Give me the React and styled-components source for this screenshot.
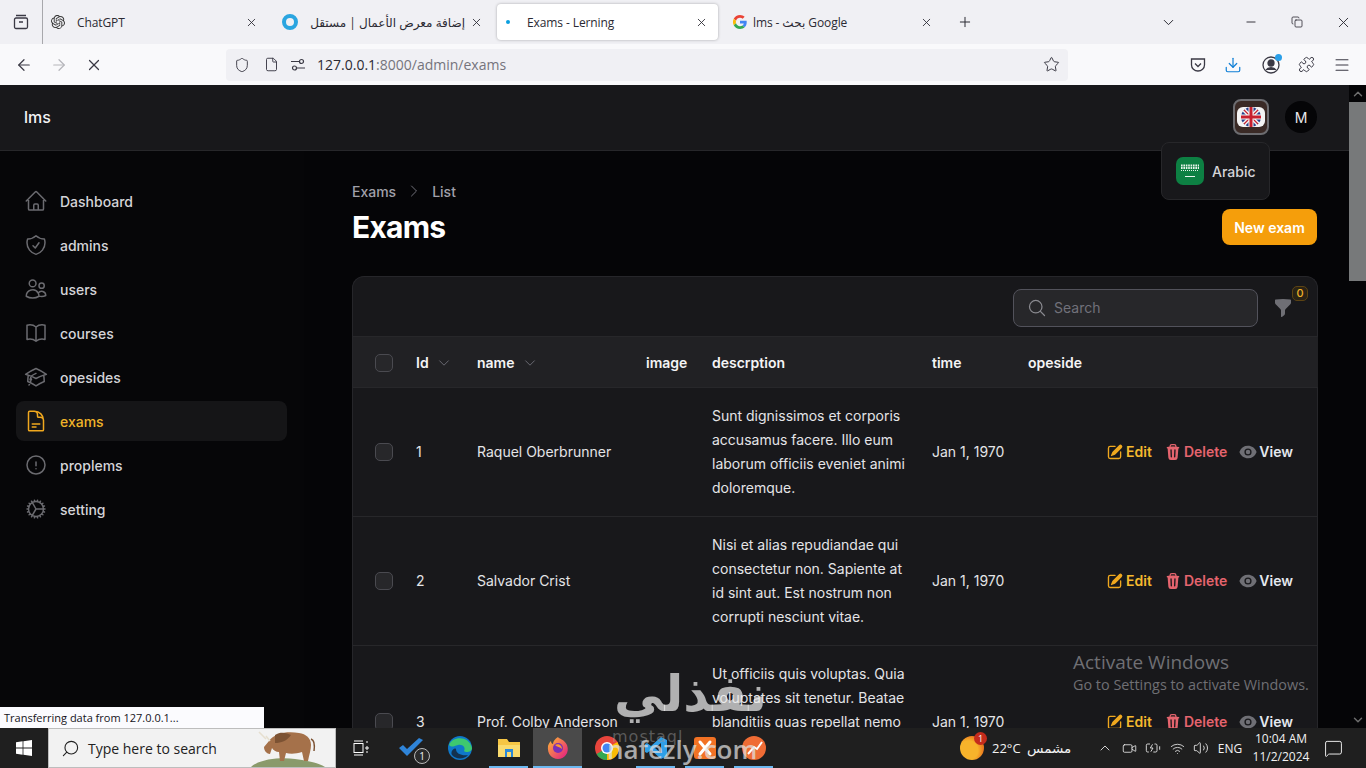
import React from 'react';
import styled, { createGlobalStyle } from 'styled-components';
import {
  ArrowLeft, ArrowRight, X, Shield, File, Star, Download, Puzzle, Menu, Plus, ChevronDown, ChevronUp, Minus, Copy,
  Search as SearchGlyph, Video, BatteryCharging, Wifi, Volume2, MessageSquare,
} from 'lucide-react';
import {
  HiOutlineHome, HiOutlineShieldCheck, HiOutlineUsers, HiOutlineBookOpen, HiOutlineAcademicCap, HiOutlineDocumentText,
  HiOutlineExclamationCircle, HiOutlineCog, HiOutlineMagnifyingGlass, HiOutlineChevronDown, HiOutlineChevronRight,
  HiMiniFunnel, HiMiniPencilSquare, HiMiniTrash, HiMiniEye,
} from 'react-icons/hi2';
import { SiOpenai } from 'react-icons/si';

const Global = createGlobalStyle`
  html, body { margin: 0; padding: 0; height: 100%; overflow: hidden; background: #000; }
  * { box-sizing: border-box; }
  #root { height: 100%; }
`;

const Screen = styled.div`
  position: relative; width: 1366px; height: 768px; display: flex; flex-direction: column; overflow: hidden;
  font-family: Inter, "Noto Sans", sans-serif;
`;

/* Browser tab strip */
const TabStrip = styled.div`
  position: relative; height: 44px; flex: none; background: #f0f0f4; display: flex; align-items: center;
  font-family: "Open Sans", "Noto Sans", "DejaVu Sans", sans-serif; color: #2b2a33;
`;
const TabsButton = styled.div`
  width: 43px; height: 44px; flex: none; border-right: 1px solid #a8a8ac; display: flex; align-items: center; justify-content: center; margin-right: 2px;
`;
const Tab = styled.div`
  width: 225px; height: 44px; flex: none; display: flex; align-items: center; position: relative; padding-left: ${p => p.$pad}px; font-size: 12px; letter-spacing: -0.1px;
  &::before {
    content: ''; position: absolute; left: 2px; right: 2px; top: 4px; bottom: 4px; border-radius: 4px;
    background: ${p => (p.$active ? '#fff' : 'transparent')}; box-shadow: ${p => (p.$active ? '0 0 3px rgba(0,0,0,.3)' : 'none')};
  }
  & > * { position: relative; }
`;
const Favicon = styled.span`
  width: 16px; height: 16px; flex: none; display: flex; align-items: center; justify-content: center;
`;
const TabTitle = styled.span`
  margin-left: ${p => p.$gap}px; white-space: nowrap;
  ${p => p.$rtl && 'direction: rtl; width: 150px;'}
`;
const TabClose = styled.span`
  position: absolute; left: 199px; top: 15px; width: 14px; height: 14px; display: flex; align-items: center; justify-content: center;
`;
const StripIcon = styled.span`
  position: absolute; top: 13px; left: ${p => p.$x}px; width: 18px; height: 18px; display: flex; align-items: center; justify-content: center;
`;
const ActiveDot = styled.span`
  width: 4px; height: 4px; border-radius: 50%; background: #0a9fe0;
`;

/* Browser nav bar */
const NavBar = styled.div`
  height: 41px; flex: none; background: #f9f9fb; display: flex; align-items: center; color: #3a3944;
  font-family: "Open Sans", "Noto Sans", sans-serif;
`;
const NavLeft = styled.div`
  width: 226px; flex: none; display: flex; align-items: center; padding-left: 15px; gap: 17px;
`;
const UrlBar = styled.div`
  width: 842px; height: 32px; flex: none; background: #f0f0f4; border-radius: 4px; display: flex; align-items: center; padding: 0 8px 0 7px; font-size: 14px;
`;
const UrlIcon = styled.span`
  width: 18px; display: flex; justify-content: center; margin-right: ${p => p.$mr}px; flex: none;
`;
const Host = styled.span`color: #2b2a33;`;
const Path = styled.span`color: #75747c;`;
const UrlStar = styled.span`margin-left: auto; display: flex;`;
const NavRight = styled.div`
  flex: 1; display: flex; align-items: center; padding-left: 121px; gap: 17px;
`;
const NavIcon = styled.span`
  position: relative; width: 18px; height: 18px; display: flex; align-items: center; justify-content: center; flex: none;
  margin-left: ${p => p.$ml || 0}px;
`;
const ProfileDot = styled.span`
  position: absolute; top: -2px; right: -2px; width: 7px; height: 7px; border-radius: 50%; background: #2a9fe8;
`;

/* App */
const AppFrame = styled.div`
  flex: 1; min-height: 0; display: flex; background: #050507; overflow: hidden;
`;
const AppColumn = styled.div`
  width: 1349px; flex: none; display: flex; flex-direction: column; min-height: 0;
`;
const Topbar = styled.header`
  position: relative; height: 66px; flex: none; background: #18181b; border-bottom: 1px solid #27272a;
  display: flex; align-items: center; padding: 0 32px 1px 24px; color: #f4f4f5;
`;
const Brand = styled.div`
  font-size: 16px; font-weight: 500; letter-spacing: 0; flex: 1;
`;
const LangButton = styled.div`
  width: 36px; height: 36px; border-radius: 8px; background: #3a2a26; border: 2px solid #6c6c70; display: flex; align-items: center; justify-content: center; margin-right: 16px;
`;
const Avatar = styled.div`
  width: 32px; height: 32px; border-radius: 50%; background: #050507; display: flex; align-items: center; justify-content: center; font-size: 14px; color: #e8e8ea;
`;
const LangMenu = styled.div`
  position: absolute; left: 1161px; top: 57px; width: 109px; height: 58px; background: #18181b; border: 1px solid #27272a; border-radius: 8px;
  display: flex; align-items: center; padding-left: 14px; gap: 8px; font-size: 14px; font-weight: 500; color: #d4d4d8; z-index: 2;
`;
const FlagBox = styled.div`
  width: 28px; height: 28px; border-radius: 7px; background: #0d8043; display: flex; align-items: center; justify-content: center;
`;
const BodyRow = styled.div`
  flex: 1; min-height: 0; display: flex; overflow: hidden;
`;
const Sidebar = styled.nav`
  width: 304px; flex: none; padding: 30px 17px 0 16px; display: flex; flex-direction: column; gap: 4px; background: #060608;
`;
const NavItem = styled.div`
  height: 40px; display: flex; align-items: center; gap: 12px; padding: 0 8px; border-radius: 8px; font-size: 14px; font-weight: 500;
  color: ${p => (p.$active ? '#f0b429' : '#d4d4d8')}; background: ${p => (p.$active ? '#151517' : 'transparent')};
  & svg { color: ${p => (p.$active ? '#f0a81e' : '#6b6b70')}; font-size: 24px; flex: none; margin-left: 0; }
`;
const Main = styled.main`
  flex: 1; min-width: 0; padding: 30px 32px 0 48px; background: #050507;
`;
const Crumbs = styled.div`
  height: 20px; display: flex; align-items: center; gap: 10px; font-size: 14px; font-weight: 500; color: #a1a1aa;
  & svg { color: #71717a; font-size: 16px; }
`;
const HeadRow = styled.div`
  margin-top: 8px; display: flex; align-items: center; justify-content: space-between; height: 36px;
`;
const Title = styled.h1`
  margin: 0; font-size: 30px; line-height: 36px; font-weight: 700; color: #fff; letter-spacing: -0.75px;
`;
const NewButton = styled.button`
  height: 36px; width: 95px; border: 0; border-radius: 8px; background: #f59e0b; color: #fff; font: 600 14px Inter, sans-serif; padding: 0;
`;
const Card = styled.section`
  margin-top: 31px; width: 966px; background: #18181b; border: 1px solid #26262a; border-bottom: 0; border-radius: 12px 12px 0 0;
`;
const Toolbar = styled.div`
  height: 60px; display: flex; align-items: center; justify-content: flex-end; padding: 2px 24px 0 0; border-bottom: 1px solid #27272a;
`;
const SearchBox = styled.div`
  width: 245px; height: 38px; background: #27272a; border: 1px solid #52525b; border-radius: 8px; display: flex; align-items: center; padding-left: 13px; gap: 7px;
  font-size: 14px; color: #71717a;
  & svg { color: #8a8a90; font-size: 20px; }
`;
const FilterWrap = styled.div`
  position: relative; width: 20px; height: 20px; margin-left: 15px; color: #6f6f75; font-size: 20px; display: flex;
`;
const FilterBadge = styled.span`
  position: absolute; left: 19px; top: -12px; width: 16px; height: 15px; border-radius: 5px; background: #2a2316; border: 1px solid #5c4313; color: #f0b429;
  font-size: 11px; font-weight: 500; display: flex; align-items: center; justify-content: center;
`;
const Table = styled.table`
  width: 965px; table-layout: fixed; border-collapse: collapse; font-size: 14px; color: #e4e4e7;
`;
const HeadRowT = styled.tr`
  height: 50px; background: #212124;
`;
const Th = styled.th`
  padding: 2px 12px 0; text-align: left; font-weight: 600; color: #f4f4f5; white-space: nowrap;
  & svg { color: #71717a; font-size: 14px; margin-left: 8px; vertical-align: -2px; }
`;
const Tr = styled.tr`
  border-top: 1px solid #27272a;
`;
const Td = styled.td`
  padding: 16px 12px; line-height: 24px; vertical-align: middle; white-space: ${p => (p.$wrap ? 'normal' : 'nowrap')};
`;
const CheckCell = styled.td`
  padding: 0 0 0 22px; vertical-align: middle;
`;
const CheckHead = styled.th`
  padding: 2px 0 0 22px; vertical-align: middle;
`;
const Checkbox = styled.div`
  width: 18px; height: 18px; border-radius: 5px; background: #27272a; border: 1px solid #4a4a50;
`;
const Actions = styled.div`
  display: flex; justify-content: flex-end; gap: 12px; padding-right: 13px; font-weight: 600;
`;
const Action = styled.span`
  display: inline-flex; align-items: center; gap: 2px; color: ${p => p.$color};
  & svg { font-size: 18px; color: ${p => p.$icon || p.$color}; }
`;

/* Scrollbar */
const Scrollbar = styled.div`
  width: 17px; flex: none; background: #050507; display: flex; flex-direction: column; align-items: center; color: #6d6d6d;
`;
const ScrollCap = styled.div`
  height: 17px; flex: none; display: flex; align-items: center; justify-content: center;
  ${p => p.$end && 'margin-top: auto;'}
`;
const Thumb = styled.div`
  width: 17px; height: 179px; background: #77797a;
`;

/* Taskbar */
const Taskbar = styled.footer`
  position: relative; height: 40px; flex: none; background: #1f1f1f; display: flex; align-items: stretch; color: #f2f2f2; z-index: 3;
  font-family: "Open Sans", "Noto Sans", "DejaVu Sans", sans-serif;
`;
const StartBtn = styled.div`
  width: 48px; flex: none; display: flex; align-items: center; justify-content: center;
`;
const TaskSearch = styled.div`
  position: relative; width: 288px; flex: none; background: #f2f2f2; border: 1px solid #bdbdbd; display: flex; align-items: center; padding-left: 12px; gap: 8px; color: #222; font-size: 14px; overflow: hidden;
`;
const SearchFlip = styled.span`
  display: flex; transform: scaleX(-1);
`;
const TaskView = styled.div`
  width: 50px; flex: none; display: flex; align-items: center; justify-content: center;
`;
const TaskItem = styled.div`
  position: relative; width: 49px; flex: none; display: flex; align-items: center; justify-content: center;
  background: ${p => (p.$active ? '#4a4a4a' : 'transparent')};
  &::after {
    content: ''; position: absolute; bottom: 0; left: ${p => (p.$active ? 0 : '5px')}; right: ${p => (p.$active ? 0 : '5px')}; height: 2px;
    background: ${p => (p.$open ? '#6cb8f0' : 'transparent')};
  }
`;
const TaskBadge = styled.span`
  position: absolute; right: 5px; bottom: 4px; width: 16px; height: 16px; border-radius: 50%; background: #2b2b2b; border: 1px solid #bbb; font-size: 10px; display: flex; align-items: center; justify-content: center;
`;
const TrayArea = styled.div`
  margin-left: auto; margin-right: 11px; display: flex; align-items: center; font-size: 13px;
`;
const Weather = styled.div`
  position: relative; width: 24px; height: 24px; flex: none; margin-right: 8px; border-radius: 50%;
  background: radial-gradient(circle at 35% 60%, #f7b32b 0 45%, #ea7a1f 70%);
`;
const WeatherBadge = styled.span`
  position: absolute; right: -3px; top: -4px; width: 13px; height: 13px; border-radius: 50%; background: #c42b1c; color: #fff; font-size: 9px; display: flex; align-items: center; justify-content: center;
`;
const WeatherText = styled.span`
  width: ${p => p.$w}px; flex: none; white-space: nowrap; font-size: ${p => p.$fs || 13}px;
`;
const TrayIcon = styled.span`
  width: 24px; flex: none; display: flex; justify-content: center; color: #eee;
`;
const Lang = styled.span`
  width: 34px; flex: none; text-align: center; font-size: 12px;
`;
const Clock = styled.div`
  width: 62px; flex: none; margin-left: 3px; text-align: center; font-size: 12px; line-height: 18px;
`;
const Notify = styled.span`
  width: 43px; flex: none; display: flex; justify-content: center;
`;

/* Overlays */
const StatusPanel = styled.div`
  position: absolute; left: 0; top: 707px; width: 264px; height: 21px; background: #fbfbfe; color: #15141a; font: 11px "Open Sans", sans-serif; display: flex; align-items: center; padding-left: 4px; z-index: 2;
`;
const Activate = styled.div`
  position: absolute; left: 1073px; top: 650px; color: #6f6f74; font-family: "Open Sans", sans-serif; font-size: 14.4px; z-index: 2; line-height: 22px;
`;
const ActivateTitle = styled.div`
  font-size: 19px; line-height: 24px;
`;
const Watermark = styled.div`
  position: absolute; left: 598px; top: 664px; width: 195px; height: 104px; z-index: 4; pointer-events: none; overflow: hidden; font-family: "DejaVu Sans", sans-serif;
`;
const WmArabic = styled.div`
  position: absolute; right: 26px; top: -6px; font-size: 50px; line-height: 72px; font-weight: 700; color: rgba(235,235,235,.72);
`;
const WmSmall = styled.div`
  position: absolute; left: 14px; top: 63px; font-size: 16px; color: rgba(150,150,150,.5); letter-spacing: 1px;
`;
const WmLatin = styled.div`
  position: absolute; left: 9px; top: 67px; font: 600 26px "Open Sans", sans-serif; color: rgba(225,225,225,.72); white-space: nowrap;
`;

const UKFlag = () => (
  <svg width="28" height="20" viewBox="0 0 28 20">
    <rect width="28" height="20" rx="6" fill="#f4f4f4" />
    <circle cx="14" cy="10" r="10" fill="#27418c" />
    <path d="M7 3L21 17M21 3L7 17" stroke="#f4f4f4" strokeWidth="4" />
    <path d="M7 3L21 17M21 3L7 17" stroke="#c8202f" strokeWidth="1.2" />
    <path d="M14 0V20M4 10H24" stroke="#f4f4f4" strokeWidth="5" />
    <path d="M14 0V20M4 10H24" stroke="#c8202f" strokeWidth="3" />
  </svg>
);
const SAFlag = () => (
  <svg width="24" height="20" viewBox="0 0 24 20" fill="none" stroke="#e8f3ec">
    <path d="M3 4.5h18M3 7h18" strokeWidth="2" strokeDasharray="1.6 .8" />
    <path d="M3 9.5h18" strokeWidth="1" strokeDasharray="1 1" />
    <path d="M7 15.5h10" strokeWidth="1" />
  </svg>
);
const Firefox = () => (
  <svg width="24" height="24" viewBox="0 0 24 24">
    <defs><linearGradient id="ff" x1="0" y1="0" x2="1" y2="1"><stop offset="0" stopColor="#ffbd2e" /><stop offset="1" stopColor="#e31587" /></linearGradient></defs>
    <path d="M12 1c1 2 6 2 9 8 3 8-3 14-9 14S1 18 2 10c1-3 2-4 3-5 0 2 1 3 2 3 0-3 2-5 5-7z" fill="url(#ff)" />
    <circle cx="12" cy="12" r="5" fill="#7b2fb5" />
    <path d="M9 9c3-2 7 0 7 4-2-2-5-2-7-4z" fill="#ff9a2e" />
  </svg>
);
const GoogleG = () => (
  <svg width="14" height="14" viewBox="0 0 48 48">
    <path fill="#EA4335" d="M24 9.5c3.5 0 6.6 1.2 9.1 3.6l6.8-6.8C35.8 2.5 30.3 0 24 0 14.6 0 6.5 5.4 2.6 13.2l7.9 6.2C12.4 13.7 17.7 9.5 24 9.5z" />
    <path fill="#4285F4" d="M47 24.5c0-1.6-.1-3.1-.4-4.5H24v9h13c-.6 3-2.3 5.5-4.8 7.2l7.7 6C44.4 37.9 47 31.8 47 24.5z" />
    <path fill="#FBBC05" d="M10.5 28.6a14.5 14.5 0 0 1 0-9.2l-7.9-6.2a24 24 0 0 0 0 21.6z" />
    <path fill="#34A853" d="M24 48c6.5 0 11.9-2.1 15.9-5.8l-7.7-6c-2.2 1.5-5 2.3-8.2 2.3-6.3 0-11.6-4.2-13.5-9.9l-7.9 6.2C6.5 42.6 14.6 48 24 48z" />
  </svg>
);
const TabsIcon = () => (
  <svg width="16" height="16" viewBox="0 0 16 16" fill="none" stroke="#3a3944" strokeWidth="1.3">
    <rect x="1.5" y="4" width="13" height="10.5" rx="1.5" /><path d="M3 1.5h10M6 8h4" />
  </svg>
);
const PermIcon = () => (
  <svg width="16" height="16" viewBox="0 0 16 16" fill="none" stroke="#3a3944" strokeWidth="1.2">
    <circle cx="11.5" cy="4.5" r="2" /><circle cx="4.5" cy="11" r="2" /><path d="M1 4.5h8M7 11h8" />
  </svg>
);
const Pocket = () => (
  <svg width="16" height="16" viewBox="0 0 16 16" fill="none" stroke="#3a3944" strokeWidth="1.3">
    <path d="M1.5 2h13v6a6.5 6 0 0 1-13 0z" /><path d="M5 6.5l3 3 3-3" />
  </svg>
);
const Profile = () => (
  <svg width="18" height="18" viewBox="0 0 18 18" fill="none" stroke="#3a3944" strokeWidth="1.3">
    <circle cx="9" cy="9" r="8" /><circle cx="9" cy="7" r="3" fill="#3a3944" /><path d="M4 14c2-3 8-3 10 0" fill="#3a3944" />
  </svg>
);
const Windows = () => (
  <svg width="16" height="16" viewBox="0 0 16 16" fill="#fff">
    <path d="M0 2.2L6.6 1.3V7.6H0zM7.4 1.2L16 0V7.6H7.4zM0 8.4H6.6V14.7L0 13.8zM7.4 8.4H16V16L7.4 14.8z" />
  </svg>
);
const TaskViewIcon = () => (
  <svg width="16" height="16" viewBox="0 0 16 16" fill="none" stroke="#fff" strokeWidth="1">
    <rect x="1" y="3.5" width="9" height="9" /><path d="M1 1h9M1 15h9M13 2h2M13 7h2v2h-2zM13 12h2" />
  </svg>
);
const Todo = () => (
  <svg width="26" height="22" viewBox="0 0 26 22"><path d="M1 11l8 8L25 3l-4-2L9 12 5 8z" fill="#2f84d8" /></svg>
);
const Edge = () => (
  <svg width="26" height="26" viewBox="0 0 26 26">
    <circle cx="13" cy="13" r="12" fill="#0f78c9" /><path d="M2 10C5 1 22 0 25 13c0 4-6 5-8 3 2-3-1-7-6-6-4 1-6 3-9 0z" fill="#3ec86f" />
    <path d="M9 14c0 5 6 7 12 6-3 4-12 5-16 0-2-3 2-8 4-6z" fill="#13324f" />
  </svg>
);
const Explorer = () => (
  <svg width="24" height="22" viewBox="0 0 24 22">
    <path d="M1 2h9l2 3h11v15H1z" fill="#f6c644" /><rect x="1" y="8" width="22" height="12" fill="#fadb6e" /><rect x="8" y="12" width="8" height="8" fill="#2a88d8" /><rect x="10" y="15" width="4" height="5" fill="#fadb6e" />
  </svg>
);
const Chrome = () => (
  <svg width="26" height="26" viewBox="0 0 26 26">
    <circle cx="13" cy="13" r="12" fill="#e8453c" /><path d="M13 13L2.6 19A12 12 0 0 0 13 25z" fill="#34a853" /><path d="M13 13L13 25A12 12 0 0 0 23.4 7z" fill="#fbbc05" /><circle cx="13" cy="13" r="6" fill="#fff" /><circle cx="13" cy="13" r="4.5" fill="#4285f4" />
  </svg>
);
const VSCode = () => (
  <svg width="24" height="24" viewBox="0 0 24 24"><path d="M17 1l6 3v16l-6 3L7 14l-4 3-2-1V8l2-1 4 3zM17 7l-6 5 6 5z" fill="#2f9fe8" /></svg>
);
const Xampp = () => (
  <svg width="24" height="24" viewBox="0 0 24 24"><rect x="1" y="1" width="22" height="22" rx="3" fill="#f27224" /><path d="M7 6l10 12M17 6L7 18" stroke="#fff" strokeWidth="3" strokeLinecap="round" /></svg>
);
const Postman = () => (
  <svg width="26" height="26" viewBox="0 0 26 26"><circle cx="13" cy="13" r="12" fill="#ef6c35" /><path d="M7 19l6-7 3 2 5-7" stroke="#fff" strokeWidth="2" fill="none" /></svg>
);
const Bison = () => (
  <svg width="74" height="40" viewBox="0 0 74 40">
    <path d="M0 40c8-8 30-10 44-8s24 4 30 8z" fill="#8a9a6b" />
    <path d="M18 14c6-8 18-10 30-8 7 1 12 5 12 12 0 5-2 10-3 16h-4l-2-9c-6 2-12 2-16 1l-2 8h-4l-1-9c-3 0-6-2-7-4l-2 6c-3 0-6-3-6-7z" fill="#a5714a" />
    <path d="M24 8c6-4 12-2 16 0-4 6-10 8-16 8z" fill="#7c5233" />
    <path d="M15 9l4 5M8 5l7 7" stroke="#e6dfcf" strokeWidth="1.5" fill="none" />
    <path d="M60 12c3 1 4 5 3 12" stroke="#7c5233" strokeWidth="1.5" fill="none" />
  </svg>
);
const BisonSlot = styled.span`
  position: absolute; right: 10px; bottom: 0; display: flex;
`;

const navItems = [
  [HiOutlineHome, 'Dashboard'],
  [HiOutlineShieldCheck, 'admins'],
  [HiOutlineUsers, 'users'],
  [HiOutlineBookOpen, 'courses'],
  [HiOutlineAcademicCap, 'opesides'],
  [HiOutlineDocumentText, 'exams', true],
  [HiOutlineExclamationCircle, 'proplems'],
  [HiOutlineCog, 'setting'],
];

const rows = [
  ['1', 'Raquel Oberbrunner', 'Sunt dignissimos et corporis accusamus facere. Illo eum laborum officiis eveniet animi doloremque.'],
  ['2', 'Salvador Crist', 'Nisi et alias repudiandae qui consectetur non. Sapiente at id sint aut. Est nostrum non corrupti nesciunt vitae.'],
  ['3', 'Prof. Colby Anderson', 'Ut officiis quis voluptas. Quia voluptates sit tenetur. Beatae blanditiis quas repellat nemo quia dolorem ipsam et rerum voluptatem sint.'],
];

const taskApps = [
  [<Todo key="a" />, false, false, true],
  [<Edge key="a" />, false, false],
  [<Explorer key="a" />, true, false],
  [<Firefox key="a" />, true, true],
  [<Chrome key="a" />, false, false],
  [<VSCode key="a" />, true, false],
  [<Xampp key="a" />, true, false],
  [<Postman key="a" />, true, false],
];

export default function App() {
  return (
    <Screen>
      <Global />
      <TabStrip>
        <TabsButton><TabsIcon /></TabsButton>
        <Tab $pad={5}>
          <Favicon><SiOpenai size={14} color="#333" /></Favicon>
          <TabTitle $gap={11}>ChatGPT</TabTitle>
          <TabClose><X size={13} strokeWidth={1.6} /></TabClose>
        </Tab>
        <Tab $pad={12}>
          <Favicon>
            <svg width="16" height="16" viewBox="0 0 16 16"><circle cx="8" cy="8" r="6" fill="none" stroke="#2aa5e0" strokeWidth="4" /></svg>
          </Favicon>
          <TabTitle $gap={17} $rtl>إضافة معرض الأعمال | مستقل</TabTitle>
          <TabClose><X size={13} strokeWidth={1.6} /></TabClose>
        </Tab>
        <Tab $pad={5} $active>
          <Favicon><ActiveDot /></Favicon>
          <TabTitle $gap={11}>Exams - Lerning</TabTitle>
          <TabClose><X size={13} strokeWidth={1.6} /></TabClose>
        </Tab>
        <Tab $pad={12}>
          <Favicon><GoogleG /></Favicon>
          <TabTitle $gap={5}>lms - بحث Google</TabTitle>
          <TabClose><X size={13} strokeWidth={1.6} /></TabClose>
        </Tab>
        <StripIcon $x={956}><Plus size={16} strokeWidth={1.5} /></StripIcon>
        <StripIcon $x={1159}><ChevronDown size={17} strokeWidth={1.4} /></StripIcon>
        <StripIcon $x={1242}><Minus size={14} strokeWidth={1.6} /></StripIcon>
        <StripIcon $x={1288}><Copy size={12} strokeWidth={1.6} /></StripIcon>
        <StripIcon $x={1334}><X size={17} strokeWidth={1.3} /></StripIcon>
      </TabStrip>

      <NavBar>
        <NavLeft>
          <NavIcon><ArrowLeft size={18} strokeWidth={1.6} /></NavIcon>
          <NavIcon><ArrowRight size={18} strokeWidth={1.6} color="#b5b5ba" /></NavIcon>
          <NavIcon><X size={18} strokeWidth={1.6} /></NavIcon>
        </NavLeft>
        <UrlBar>
          <UrlIcon $mr={11}><Shield size={16} strokeWidth={1.4} /></UrlIcon>
          <UrlIcon $mr={9}><File size={15} strokeWidth={1.5} /></UrlIcon>
          <UrlIcon $mr={10}><PermIcon /></UrlIcon>
          <Host>127.0.0.1</Host><Path>:8000/admin/exams</Path>
          <UrlStar><Star size={17} strokeWidth={1.4} /></UrlStar>
        </UrlBar>
        <NavRight>
          <NavIcon><Pocket /></NavIcon>
          <NavIcon><Download size={18} strokeWidth={1.6} color="#0f7fd6" /></NavIcon>
          <NavIcon $ml={3}><Profile /><ProfileDot /></NavIcon>
          <NavIcon><Puzzle size={17} strokeWidth={1.4} /></NavIcon>
          <NavIcon $ml={1}><Menu size={18} strokeWidth={1.4} /></NavIcon>
        </NavRight>
      </NavBar>

      <AppFrame>
        <AppColumn>
          <Topbar>
            <Brand>lms</Brand>
            <LangButton><UKFlag /></LangButton>
            <Avatar>M</Avatar>
            <LangMenu>
              <FlagBox><SAFlag /></FlagBox>
              Arabic
            </LangMenu>
          </Topbar>
          <BodyRow>
            <Sidebar>
              {navItems.map(([Icon, label, active]) => (
                <NavItem key={label} $active={active}><Icon />{label}</NavItem>
              ))}
            </Sidebar>
            <Main>
              <Crumbs>Exams <HiOutlineChevronRight /> List</Crumbs>
              <HeadRow>
                <Title>Exams</Title>
                <NewButton>New exam</NewButton>
              </HeadRow>
              <Card>
                <Toolbar>
                  <SearchBox><HiOutlineMagnifyingGlass />Search</SearchBox>
                  <FilterWrap><HiMiniFunnel /><FilterBadge>0</FilterBadge></FilterWrap>
                </Toolbar>
                <Table>
                  <colgroup>
                    <col width="51" /><col width="61" /><col width="169" /><col width="66" /><col width="220" /><col width="96" /><col width="80" /><col />
                  </colgroup>
                  <thead>
                    <HeadRowT>
                      <CheckHead><Checkbox /></CheckHead>
                      <Th>Id<HiOutlineChevronDown /></Th>
                      <Th>name<HiOutlineChevronDown /></Th>
                      <Th>image</Th>
                      <Th>descrption</Th>
                      <Th>time</Th>
                      <Th>opeside</Th>
                      <Th />
                    </HeadRowT>
                  </thead>
                  <tbody>
                    {rows.map(([id, name, desc]) => (
                      <Tr key={id}>
                        <CheckCell><Checkbox /></CheckCell>
                        <Td>{id}</Td>
                        <Td>{name}</Td>
                        <Td />
                        <Td $wrap>{desc}</Td>
                        <Td>Jan 1, 1970</Td>
                        <Td />
                        <Td>
                          <Actions>
                            <Action $color="#f5b82e" $icon="#f0a81e"><HiMiniPencilSquare />Edit</Action>
                            <Action $color="#e5646e"><HiMiniTrash />Delete</Action>
                            <Action $color="#e4e8ef" $icon="#6f6f75"><HiMiniEye />View</Action>
                          </Actions>
                        </Td>
                      </Tr>
                    ))}
                  </tbody>
                </Table>
              </Card>
            </Main>
          </BodyRow>
        </AppColumn>
        <Scrollbar>
          <ScrollCap><ChevronUp size={14} strokeWidth={2.5} /></ScrollCap>
          <Thumb />
          <ScrollCap $end><ChevronDown size={14} strokeWidth={2.5} /></ScrollCap>
        </Scrollbar>
      </AppFrame>

      <Taskbar>
        <StartBtn><Windows /></StartBtn>
        <TaskSearch>
          <SearchFlip><SearchGlyph size={19} strokeWidth={1.4} /></SearchFlip>
          Type here to search
          <BisonSlot><Bison /></BisonSlot>
        </TaskSearch>
        <TaskView><TaskViewIcon /></TaskView>
        {taskApps.map(([icon, open, active, badge], i) => (
          <TaskItem key={i} $open={open} $active={active}>
            {icon}
            {badge && <TaskBadge>1</TaskBadge>}
          </TaskItem>
        ))}
        <TrayArea>
          <Weather><WeatherBadge>1</WeatherBadge></Weather>
          <WeatherText $w={35}>22°C</WeatherText>
          <WeatherText $w={66} $fs={13.5}>مشمس</WeatherText>
          <TrayIcon><ChevronUp size={16} strokeWidth={1.3} /></TrayIcon>
          <TrayIcon><Video size={15} strokeWidth={1.3} /></TrayIcon>
          <TrayIcon><BatteryCharging size={16} strokeWidth={1.3} /></TrayIcon>
          <TrayIcon><Wifi size={15} strokeWidth={1.3} /></TrayIcon>
          <TrayIcon><Volume2 size={16} strokeWidth={1.3} /></TrayIcon>
          <Lang>ENG</Lang>
          <Clock>10:04 AM<br />11/2/2024</Clock>
          <Notify><MessageSquare size={19} strokeWidth={1.2} /></Notify>
        </TrayArea>
      </Taskbar>

      <StatusPanel>Transferring data from 127.0.0.1...</StatusPanel>
      <Activate>
        <ActivateTitle>Activate Windows</ActivateTitle>
        Go to Settings to activate Windows.
      </Activate>
      <Watermark>
        <WmArabic>نفذلي</WmArabic>
        <WmSmall>mostaql</WmSmall>
        <WmLatin>nafezly.com</WmLatin>
      </Watermark>
    </Screen>
  );
}
